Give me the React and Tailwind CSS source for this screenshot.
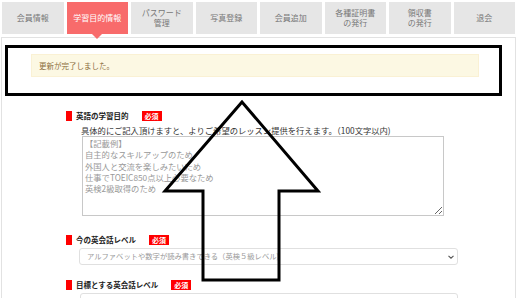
import React from "react";

const tabs = ["会員情報", "学習目的情報", "パスワード\n管理", "写真登録", "会員追加", "各種証明書\nの発行", "領収書\nの発行", "退会"];

const Label = ({ text }) => (
  <div className="flex items-center h-[10px]">
    <span className="w-[6px] h-[10px] bg-[#f00]"></span>
    <span className="ml-[4px] text-[7.5px] font-bold text-[#222] leading-none">{text}</span>
    <span className="ml-[13px] w-[20px] h-[10px] bg-[#f00] text-white text-[7px] font-bold leading-[10px] text-center">必須</span>
  </div>
);

const Chevron = () => (
  <svg width="6" height="4" viewBox="0 0 6 4">
    <path d="M0.5 0.8 L3 3.2 L5.5 0.8" stroke="#555" strokeWidth="1.1" fill="none" />
  </svg>
);

export default function App() {
  return (
    <div className="relative w-[517px] h-[298px] overflow-hidden bg-white font-['Noto_Sans_CJK_JP',sans-serif]">
      {/* Tabs */}
      <div className="flex gap-[3px] px-[2px] pt-[2px]">
        {tabs.map((t, i) => (
          <div
            key={t}
            className={`relative flex-1 h-[32px] flex items-center justify-center text-center whitespace-pre-line text-[8px] leading-[10px] ${
              i === 1 ? "bg-[#f86b6b] text-white" : "bg-[#e6e6e6] text-[#777]"
            }`}
          >
            {t}
            {i === 1 && (
              <span className="absolute left-1/2 -translate-x-1/2 top-full w-0 h-0 border-l-[5px] border-r-[5px] border-t-[5px] border-l-transparent border-r-transparent border-t-[#f86b6b]"></span>
            )}
          </div>
        ))}
      </div>

      {/* Panel */}
      <div className="mx-px mt-[3px] h-[262px] border border-[#e2e2e2]">
        {/* Alert */}
        <div className="ml-[29px] mt-[16px] w-[448px] h-[23px] bg-[#fcf8e3] border border-[#faf1d4] flex items-center px-[7px] text-[7.5px] text-[#8a6d3b]">
          更新が完了しました。
        </div>

        {/* Form */}
        <div className="pl-[64px] mt-[34px]">
          <Label text="英語の学習目的" />
          <p className="ml-[15px] mt-[4px] text-[8.3px] leading-[10px] text-[#333] whitespace-nowrap">
            具体的にご記入頂けますと、よりご希望のレッスン提供を行えます。（100文字以内)
          </p>
          <textarea
            readOnly
            className="block ml-[16px] mt-[1px] w-[362px] h-[80px] border border-[#c8c8c8] px-[2px] py-[1px] text-[8.3px] leading-[11.3px] placeholder:text-[#999] outline-none font-['Noto_Sans_CJK_JP',sans-serif]"
            placeholder={"【記載例】\n自主的なスキルアップのため\n外国人と交流を楽しみたいため\n仕事でTOEIC850点以上必要なため\n英検2級取得のため"}
          ></textarea>

          <div className="mt-[19px]">
            <Label text="今の英会話レベル" />
          </div>
          <div className="ml-[13px] mt-[3px] w-[379px] h-[17px] border border-[#e0e0e0] rounded-[3px] flex items-center justify-between pl-[7px] pr-[3px] text-[7.3px] text-[#999]">
            <span>アルファベットや数字が読み書きできる（英検５級レベル)</span>
            <Chevron />
          </div>

          <div className="mt-[15px]">
            <Label text="目標とする英会話レベル" />
          </div>
          <div className="ml-[14px] mt-[3px] w-[378px] h-[17px] border border-[#e0e0e0] rounded-[3px]"></div>
        </div>
      </div>

      {/* Annotation overlay */}
      <div className="absolute left-[5px] top-[45px] w-[497px] h-[51px] border-[3px] border-black pointer-events-none"></div>
      <svg className="absolute inset-0 pointer-events-none" width="517" height="298" viewBox="0 0 517 298">
        <polygon
          points="242,102 165,191 203,191 203,280 279,280 279,191 318,191"
          fill="none"
          stroke="#000"
          strokeWidth="3"
          strokeLinejoin="miter"
        />
      </svg>
    </div>
  );
}
